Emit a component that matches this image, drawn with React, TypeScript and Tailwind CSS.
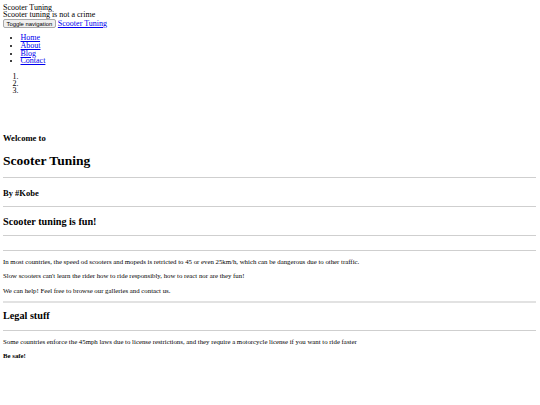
import React from "react";

const navLinks = ["Home", "About", "Blog", "Contact"];

const rule = "h-px w-full shrink-0 bg-[#cfcfcf]";
const small = "text-[6.8px] leading-[8px]";

export default function App() {
  return (
    <div className="flex min-h-[405px] flex-col bg-white pt-[3.5px] pl-[3px] pr-[4px] font-['Liberation_Serif',serif] text-[8px] text-black">
      <div className="leading-[7.5px]">Scooter Tuning</div>
      <div className="leading-[7.5px]">Scooter tuning is not a crime</div>
      <div className="mt-[0.5px] flex h-[9px] items-start gap-[2px]">
        <button className="flex h-[9px] items-center rounded-[2px] border border-[#a9a9a9] bg-[#efefef] px-[2.5px] font-['Liberation_Sans',sans-serif] text-[5.9px] leading-[6px]">
          Toggle navigation
        </button>
        <a href="#" className="leading-[9px] text-[#0000ee] underline">
          Scooter Tuning
        </a>
      </div>

      <ul className="mt-[6px] list-disc pl-[17.5px]">
        {navLinks.map((l) => (
          <li key={l} className="leading-[7.75px]">
            <a href="#" className="text-[#0000ee] underline">
              {l}
            </a>
          </li>
        ))}
      </ul>

      <ol className="mt-[7.5px] list-decimal pl-[17.5px]">
        <li className="leading-[7.3px]">&nbsp;</li>
        <li className="leading-[7.3px]">&nbsp;</li>
        <li className="leading-[7.3px]">&nbsp;</li>
      </ol>

      <h4 className="mt-[38.7px] text-[8.6px] leading-[10px] font-bold">Welcome to</h4>
      <h2 className="mt-[9.5px] text-[13.5px] leading-[15.5px] font-bold">Scooter Tuning</h2>
      <div className={`mt-[9px] ${rule}`} />
      <h4 className="mt-[10px] text-[8.5px] leading-[10px] font-bold">By #Kobe</h4>
      <div className={`mt-[8px] ${rule}`} />
      <h3 className="mt-[9.4px] text-[10.2px] leading-[12px] font-bold">Scooter tuning is fun!</h3>
      <div className={`mt-[6.5px] ${rule}`} />
      <div className={`mt-[14px] ${rule}`} />

      <p className={`mt-[6.7px] ${small}`}>
        In most countries, the speed od scooters and mopeds is retricted to 45 or even 25km/h, which can be dangerous due to other traffic.
      </p>
      <p className={`mt-[6px] ${small}`}>
        Slow scooters can't learn the rider how to ride responsibly, how to react nor are they fun!
      </p>
      <p className={`mt-[7px] ${small}`}>We can help! Feel free to browse our galleries and contact us.</p>

      <div className="mt-[6px] h-[2px] w-full shrink-0 bg-[#e2e2e2]" />
      <h3 className="mt-[7.5px] text-[10.2px] leading-[12px] font-bold">Legal stuff</h3>
      <div className={`mt-[7.8px] ${rule}`} />
      <p className={`mt-[7.4px] ${small}`}>
        Some countries enforce the 45mph laws due to license restrictions, and they require a motorcycle license if you want to ride faster
      </p>
      <p className={`mt-[5.3px] font-bold ${small}`}>Be safe!</p>
    </div>
  );
}
